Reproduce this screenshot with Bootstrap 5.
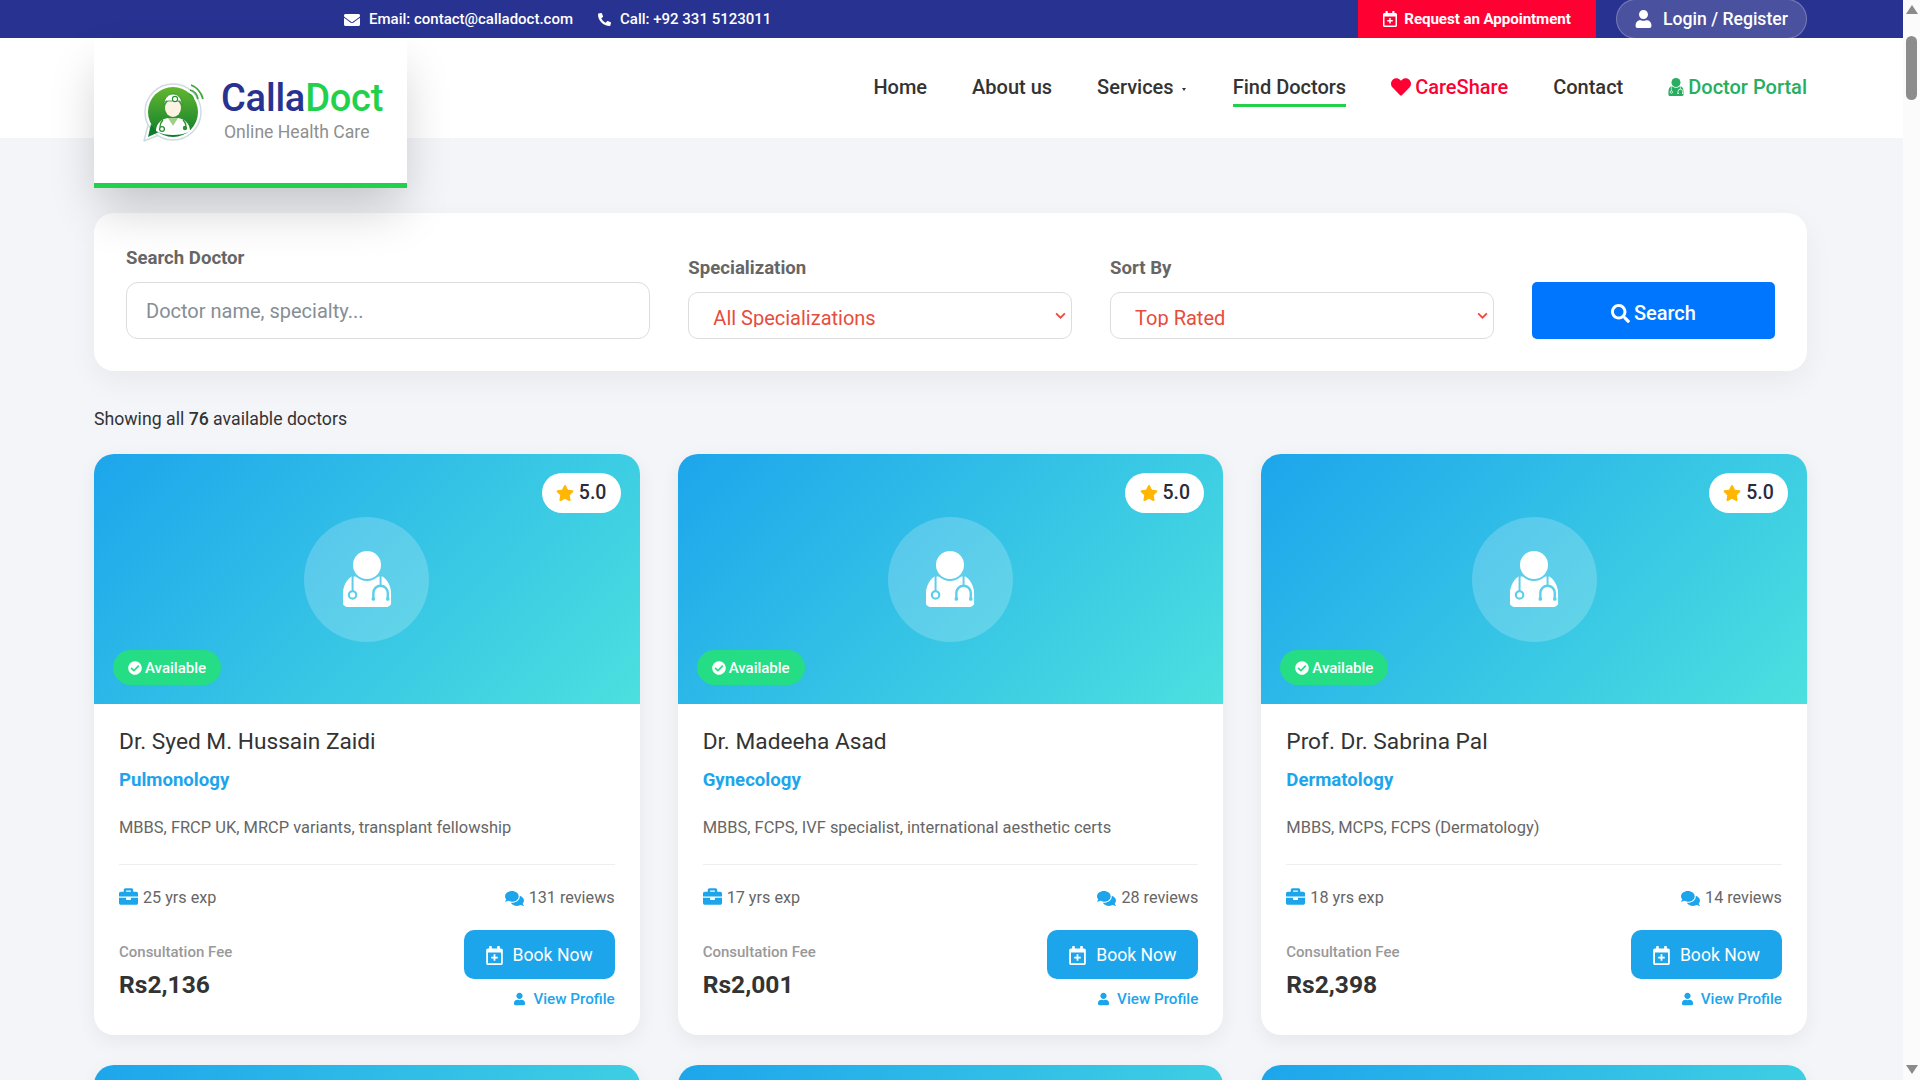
<!DOCTYPE html>
<html lang="en">
<head>
  <meta charset="utf-8">
  <title>Find Doctors - CallaDoct</title>
  <link href="https://cdn.jsdelivr.net/npm/bootstrap@5.3.0/dist/css/bootstrap.min.css" rel="stylesheet">
  <style>
    html, body { height: 100%; overflow: hidden; }
    body { font-family: Roboto, "Liberation Sans", sans-serif; background: #f3f5f9; color: #333; }
    .ico { fill: currentColor; flex: none; display: inline-block; }
    .sym-sheet { position: absolute; width: 0; height: 0; }

    .page-shell { height: 100vh; }
    .page-main { height: 100vh; overflow: hidden; min-width: 0; }
    .wrap-x { padding-left: 94px; padding-right: 96px; }

    /* fake browser scrollbar */
    .fake-scroll { width: 17px; height: 100vh; background: #fbfbfb; }
    .fake-arrow-up { width: 0; height: 0; border-left: 6px solid transparent; border-right: 6px solid transparent; border-bottom: 9px solid #8a8a8a; margin-top: 5px; }
    .fake-arrow-down { width: 0; height: 0; border-left: 6px solid transparent; border-right: 6px solid transparent; border-top: 9px solid #8a8a8a; margin-bottom: 6px; }
    .fake-thumb { width: 11px; height: 64px; margin-top: 22px; background: #8c8c8c; border-radius: 6px; }

    .top-strip { height: 38px; background: #283290; color: #fff; overflow: hidden; }
    .top-contact { padding-left: 250px; padding-top: 1px; font-size: 15px; font-weight: 500; gap: 25px; }
    .top-contact span { display: flex; align-items: center; gap: 9px; }
    .top-appoint { height: 38px; width: 238px; background: #ff0033; color: #fff; font-size: 15.2px; font-weight: 700; letter-spacing: -.1px; text-decoration: none; gap: 7px; }
    .top-login { height: 40px; width: 191px; margin-left: 20px; background: #4a519e; border: 1px solid rgba(255,255,255,.25); border-radius: 40px; color: #fff; font-size: 17.6px; font-weight: 500; text-decoration: none; gap: 11px; }

    .head-bar { height: 100px; background: #fff; }
    .logo-box { width: 313px; height: 150px; margin-bottom: -50px; background: #fff; border-bottom: 5px solid #22d14b; box-shadow: 0 25px 50px -5px rgba(0,0,0,.2); position: relative; z-index: 5; padding: 38px 0 0 47px; }
    .logo-mark { margin: 7px 14px 0 0; flex: none; }
    .logo-name { font-size: 38px; font-weight: 500; line-height: 44px; letter-spacing: -.2px; color: #283290; }
    .logo-name b { font-weight: 500; color: #22d14b; }
    .logo-sub { font-size: 17.6px; line-height: 22px; color: #8f8f8f; margin-left: 3px; margin-top: 1px; }

    .main-menu { gap: 45px; }
    .main-menu a { font-size: 20px; font-weight: 500; color: #333; text-decoration: none; display: flex; align-items: center; line-height: 28px; padding: 3px 0; border-bottom: 3px solid transparent; }
    .main-menu a.is-active { border-bottom-color: #22d14b; }
    .main-menu a.is-red { color: #ff0033; }
    .main-menu a.is-green { color: #27ae60; }
    .menu-caret { width: 0; height: 0; border-left: 2.5px solid transparent; border-right: 2.5px solid transparent; border-top: 3px solid #333; margin: 5px 2px 0 8px; }

    .search-panel { margin-top: 75px; background: #fff; border-radius: 20px; padding: 32px; box-shadow: 0 10px 30px rgba(0,0,0,.05); }
    .search-row { --bs-gutter-x: 38px; --bs-gutter-y: 0; }
    .search-label { font-size: 18.6px; font-weight: 700; color: #666; margin-bottom: 12px; padding-top: 1px; line-height: 24px; display: block; }
    .search-input { height: 57px; border-radius: 12px; border: 1px solid #ddd; padding: 0 19px; font-size: 20px; color: #333; }
    .search-input::placeholder { color: #868e96; }
    .search-select { height: 47px; border-radius: 10px; border: 1px solid #ddd; padding: 13px 24px 11px 24px; font-size: 20px; line-height: 24px; color: #e74c3c;
      background-image: url("data:image/svg+xml,%3csvg xmlns='http://www.w3.org/2000/svg' viewBox='0 0 12 8'%3e%3cpath fill='none' stroke='%23e74c3c' stroke-width='2' d='M1 1.500l5 5 5-5'/%3e%3c/svg%3e"); background-position: right 5px center; background-size: 11px 7px; }
    .search-btn { height: 57px; width: 100%; padding-top: 11px; background: #0076ff; color: #fff; border: 0; border-radius: 5px; font-size: 20px; font-weight: 500; }

    .result-note { font-size: 17.7px; line-height: 24px; margin: 36px 0 23px; color: #333; }
    .result-note strong { font-weight: 500; }

    .doc-row { --bs-gutter-x: 38px; --bs-gutter-y: 30px; }
    .doc-card { background: #fff; border-radius: 20px; overflow: hidden; box-shadow: 0 6px 20px rgba(0,0,0,.06); height: 581px; }
    .doc-head { height: 250px; background: linear-gradient(135deg, #1da5ec, #4ce0df); position: relative; }
    .doc-avatar { width: 125px; height: 125px; border-radius: 50%; background: rgba(255,255,255,.2); color: #fff; }
    .doc-rate { position: absolute; top: 19px; right: 19px; width: 79px; height: 40px; background: #fff; border-radius: 20px; font-size: 19.5px; font-weight: 500; color: #2b2b3a; gap: 5px; }
    .doc-avail { position: absolute; left: 19px; bottom: 19px; height: 35px; width: 108px; padding-top: 1px; background: #25dd84; color: #fff; border-radius: 18px; font-size: 15px; font-weight: 500; gap: 3px; }
    .doc-body { padding: 21px 25px 0; }
    .doc-name { font-size: 22.7px; font-weight: 450; line-height: 34px; margin: 0; color: #333; }
    .doc-spec { font-size: 18.6px; font-weight: 700; color: #1da5ec; line-height: 24px; margin-top: 9px; }
    .doc-qual { font-size: 16.45px; font-weight: 400; color: #666; line-height: 22px; margin-top: 25px; padding-bottom: 25px; border-bottom: 1px solid #eee; }
    .doc-meta { font-size: 16.2px; color: #666; margin-top: 21px; line-height: 24px; }
    .doc-meta span { display: flex; align-items: center; gap: 5px; }
    .doc-meta .ico { color: #1da5ec; }
    .doc-meta .ico-case { margin-top: -4px; }
    .fee-label { font-size: 15px; font-weight: 500; color: #999; line-height: 20px; margin-top: 32px; }
    .fee-value { font-size: 24.6px; font-weight: 700; color: #333; line-height: 34px; margin-top: 6px; }
    .book-btn { width: 151px; height: 49px; padding-top: 8px; background: #1da5ec; color: #fff; border: 0; border-radius: 10px; font-size: 17.6px; font-weight: 400; gap: 10px; }
    .profile-link { font-size: 15.2px; font-weight: 500; color: #1da5ec; text-decoration: none; gap: 8px; line-height: 20px; margin-top: 10px; }
    .book-col { padding-top: 20px; }
  </style>
</head>
<body>
  <svg width="0" height="0" class="sym-sheet">
    <defs>
      <symbol id="i-mail" viewBox="0 0 512 512"><path d="M502.3 190.8c3.9-3.1 9.7-.2 9.7 4.7V400c0 26.5-21.5 48-48 48H48c-26.5 0-48-21.5-48-48V195.6c0-5 5.7-7.8 9.7-4.7 22.4 17.4 52.1 39.5 154.1 113.6 21.1 15.4 56.7 47.8 92.2 47.6 35.7.3 72-32.8 92.3-47.6 102-74.1 131.6-96.3 154-113.7zM256 320c23.2.4 56.6-29.2 73.4-41.4 132.7-96.3 142.8-104.7 173.4-128.7 5.8-4.5 9.2-11.5 9.2-18.9v-19c0-26.5-21.5-48-48-48H48C21.5 64 0 85.5 0 112v19c0 7.4 3.4 14.3 9.2 18.9 30.6 23.9 40.7 32.4 173.4 128.7 16.8 12.2 50.2 41.8 73.4 41.4z"/></symbol>
      <symbol id="i-phone" viewBox="0 0 512 512"><path transform="matrix(-1 0 0 1 512 0)" d="M493.4 24.6l-104-24c-11.3-2.6-22.9 3.3-27.5 13.9l-48 112c-4.2 9.8-1.4 21.3 6.9 28l60.6 49.6c-36 76.7-98.9 140.5-177.2 177.2l-49.6-60.6c-6.8-8.3-18.2-11.1-28-6.9l-112 48C3.9 366.5-2 378.1.6 389.4l24 104C27.1 504.2 36.7 512 48 512c256.1 0 464-207.5 464-464 0-11.2-7.7-20.9-18.6-23.4z"/></symbol>
      <symbol id="i-cal" viewBox="0 0 448 512"><path fill-rule="evenodd" d="M96 0h40c9 0 16 7 16 16v48h144V16c0-9 7-16 16-16h40c9 0 16 7 16 16v48h32c26.500 0 48 21.500 48 48v352c0 26.500-21.500 48-48 48H48c-26.500 0-48-21.500-48-48V112c0-26.500 21.500-48 48-48h32V16c0-9 7-16 16-16zM48 176v282c0 3 3 6 6 6h340c3 0 6-3 6-6V176H48zM200 224h48v64h64v48h-64v64h-48v-64h-64v-48h64z"/></symbol>
      <symbol id="i-user" viewBox="0 0 448 512"><path d="M224 256c70.700 0 128-57.300 128-128S294.700 0 224 0 96 57.300 96 128s57.300 128 128 128zm89.600 32h-16.700c-22.200 10.200-46.900 16-72.900 16s-50.600-5.800-72.900-16h-16.700C60.200 288 0 348.200 0 422.400V464c0 26.500 21.500 48 48 48h352c26.500 0 48-21.500 48-48v-41.600c0-74.200-60.200-134.400-134.400-134.400z"/></symbol>
      <symbol id="i-heart" viewBox="0 0 512 512"><path d="M462.300 62.600C407.500 15.900 326 24.300 275.700 76.200L256 96.500l-19.700-20.300C186.100 24.300 104.500 15.900 49.700 62.600c-62.800 53.600-66.100 149.800-9.900 207.900l193.500 199.800c12.500 12.900 32.800 12.900 45.300 0l193.500-199.800c56.300-58.100 53-154.300-9.800-207.900z"/></symbol>
      <symbol id="i-star" viewBox="0 0 576 512"><path d="M259.300 17.800L194 150.200 47.900 171.500c-26.200 3.800-36.700 36.100-17.700 54.600l105.700 103-25 145.500c-4.500 26.300 23.200 46 46.400 33.700L288 439.600l130.700 68.700c23.200 12.200 50.900-7.400 46.400-33.700l-25-145.500 105.700-103c19-18.500 8.500-50.800-17.700-54.600L382 150.200 316.700 17.800c-11.700-23.600-45.600-24.100-57.400 0z"/></symbol>
      <symbol id="i-check" viewBox="0 0 512 512"><path d="M504 256c0 136.967-111.033 248-248 248S8 392.967 8 256 119.033 8 256 8s248 111.033 248 248zM227.314 387.314l184-184c6.248-6.248 6.248-16.379 0-22.627l-22.627-22.627c-6.248-6.249-16.379-6.249-22.628 0L216 308.118l-70.059-70.059c-6.248-6.248-16.379-6.248-22.628 0l-22.627 22.627c-6.248 6.248-6.248 16.379 0 22.627l104 104c6.249 6.249 16.379 6.249 22.628.001z"/></symbol>
      <symbol id="i-case" viewBox="0 0 512 512"><path d="M320 336c0 8.840-7.160 16-16 16h-96c-8.840 0-16-7.160-16-16v-48H0v144c0 25.600 22.400 48 48 48h416c25.600 0 48-22.400 48-48V288H320v48zm144-208h-80V80c0-25.600-22.400-48-48-48H176c-25.600 0-48 22.400-48 48v48H48c-25.600 0-48 22.400-48 48v80h512v-80c0-25.600-22.400-48-48-48zm-144 0H192V96h128v32z"/></symbol>
      <symbol id="i-chat" viewBox="0 0 576 512"><path d="M416 192c0-88.400-93.100-160-208-160S0 103.600 0 192c0 34.300 14.100 65.900 38 92-13.400 30.200-35.500 54.200-35.800 54.500-2.200 2.300-2.800 5.700-1.500 8.700S4.800 352 8 352c36.600 0 66.900-12.300 88.700-25 32.200 15.700 70.300 25 111.300 25 114.900 0 208-71.600 208-160zm122 220c23.900-26 38-57.700 38-92 0-66.900-53.500-124.200-129.300-148.100.9 6.600 1.300 13.300 1.300 20.100 0 105.900-107.700 192-240 192-10.800 0-21.300-.8-31.700-1.900C207.800 439.600 281.800 480 368 480c41 0 79.100-9.200 111.300-25 21.800 12.700 52.100 25 88.700 25 3.200 0 6.100-1.900 7.300-4.800 1.300-2.900.7-6.300-1.500-8.700-.3-.3-22.400-24.200-35.800-54.500z"/></symbol>
      <symbol id="i-search" viewBox="0 0 512 512"><path d="M505 442.700L405.300 343c-4.500-4.500-10.600-7-17-7H372c27.600-35.300 44-79.700 44-128C416 93.100 322.900 0 208 0S0 93.100 0 208s93.100 208 208 208c48.300 0 92.700-16.400 128-44v16.300c0 6.400 2.500 12.500 7 17l99.700 99.700c9.400 9.400 24.600 9.400 33.900 0l28.300-28.300c9.400-9.400 9.400-24.600.1-34zM208 336c-70.700 0-128-57.200-128-128 0-70.700 57.200-128 128-128 70.700 0 128 57.200 128 128 0 70.700-57.200 128-128 128z"/></symbol>
      <mask id="m-doc" maskUnits="userSpaceOnUse" x="0" y="0" width="448" height="512">
        <rect width="448" height="512" fill="#fff"/>
        <circle cx="224" cy="128" r="146" fill="#000"/>
        <path d="M92 220V368M348 220V320" stroke="#000" stroke-width="18" fill="none"/>
        <circle cx="92" cy="402" r="34" fill="none" stroke="#000" stroke-width="20"/>
        <path d="M282 436V384a66 66 0 0 1 132 0V436" stroke="#000" stroke-width="22" fill="none" stroke-linecap="round"/>
        <circle cx="282" cy="438" r="17" fill="#000"/>
        <circle cx="414" cy="438" r="17" fill="#000"/>
      </mask>
      <symbol id="i-doc" viewBox="0 0 448 512">
        <circle cx="224" cy="128" r="128"/>
        <path mask="url(#m-doc)" d="M0 422c0-84 26-150 82-190H366c56 40 82 106 82 190v42c0 26-21 48-48 48H48c-27 0-48-22-48-48z"/>
      </symbol>
    </defs>
  </svg>

  <div class="page-shell d-flex">
    <div class="page-main flex-grow-1">

      <div class="top-strip wrap-x d-flex align-items-center justify-content-between">
        <div class="top-contact d-flex">
          <span><svg class="ico" width="16" height="16"><use href="#i-mail"/></svg>Email: contact@calladoct.com</span>
          <span><svg class="ico" width="13" height="13"><use href="#i-phone"/></svg>Call: +92 331 5123011</span>
        </div>
        <div class="d-flex align-items-center">
          <a href="#" class="top-appoint d-flex align-items-center justify-content-center"><svg class="ico" width="14" height="16"><use href="#i-cal"/></svg>Request an Appointment</a>
          <a href="#" class="top-login d-flex align-items-center justify-content-center"><svg class="ico" width="17" height="18"><use href="#i-user"/></svg>Login / Register</a>
        </div>
      </div>

      <header class="head-bar wrap-x d-flex align-items-start justify-content-between">
        <div class="logo-box d-flex">
          <svg class="logo-mark" width="66" height="62" viewBox="0 0 66 62">
            <defs><linearGradient id="lg" x1="0" y1="0" x2="0" y2="1"><stop offset="0" stop-color="#63b72f"/><stop offset="1" stop-color="#0e7c2d"/></linearGradient></defs>
            <path d="M3 58 L7 42 L18 52 Z" fill="#fff" stroke="#cfdbe2" stroke-width="1.500" stroke-linejoin="round"/>
            <circle cx="32" cy="29" r="28" fill="#fff" stroke="#cfdbe2" stroke-width="1.500"/>
            <path d="M7 54 L10 41 L18 49 Z" fill="#0e7c2d"/>
            <circle cx="32" cy="29" r="25" fill="url(#lg)"/>
            <path d="M15 48c0-8 6-12 12-13h10c6 1 12 5 12 13-5 3-11 4-17 4s-12-1-17-4z" fill="#fff"/>
            <path d="M27 35l5 8 5-8" fill="#9fd08a"/>
            <path d="M22 37c-2 2-3 4-3 7M42 37c2 2 3 4 3 6" stroke="#2b8f2e" stroke-width="1.300" fill="none"/>
            <circle cx="21" cy="46" r="2.400" fill="none" stroke="#2b8f2e" stroke-width="1.300"/>
            <circle cx="44" cy="45" r="2.200" fill="#2b8f2e"/>
            <ellipse cx="32" cy="25" rx="8" ry="9" fill="#fdf3e4"/>
            <path d="M23 22c0-8 5-11 9-11s9 3 9 11l-2-4H25z" fill="#fff" stroke="#2b8f2e" stroke-width=".8"/>
            <circle cx="34" cy="16" r="2.600" fill="#fff" stroke="#2b8f2e" stroke-width="1.100"/>
            <path d="M50 2c6 2 10 7 12 14M49 7c4 1 7 4 8 9M48 11c2 1 4 3 4 5" stroke="#3fa63a" stroke-width="1.800" fill="none"/>
          </svg>
          <div>
            <div class="logo-name">Calla<b>Doct</b></div>
            <div class="logo-sub">Online Health Care</div>
          </div>
        </div>
        <nav class="main-menu d-flex align-self-center">
          <a href="#">Home</a>
          <a href="#">About us</a>
          <a href="#">Services<i class="menu-caret"></i></a>
          <a href="#" class="is-active">Find Doctors</a>
          <a href="#" class="is-red"><svg class="ico me-1" width="20" height="20"><use href="#i-heart"/></svg>CareShare</a>
          <a href="#">Contact</a>
          <a href="#" class="is-green"><svg class="ico me-1" width="16" height="18"><use href="#i-doc"/></svg>Doctor Portal</a>
        </nav>
      </header>

      <div class="wrap-x">
        <form class="search-panel">
          <div class="row search-row align-items-end">
            <div class="col-4">
              <label class="search-label" for="q">Search Doctor</label>
              <input id="q" type="text" class="form-control search-input" placeholder="Doctor name, specialty...">
            </div>
            <div class="col-3">
              <label class="search-label" for="spec">Specialization</label>
              <select id="spec" class="form-select search-select"><option>All Specializations</option></select>
            </div>
            <div class="col-3">
              <label class="search-label" for="sort">Sort By</label>
              <select id="sort" class="form-select search-select"><option>Top Rated</option></select>
            </div>
            <div class="col-2">
              <button type="button" class="btn search-btn d-flex align-items-center justify-content-center gap-1"><svg class="ico" width="19" height="19"><use href="#i-search"/></svg>Search</button>
            </div>
          </div>
        </form>

        <p class="result-note">Showing all <strong>76</strong> available doctors</p>

        <div class="row doc-row">

          <div class="col-4">
            <div class="doc-card">
              <div class="doc-head d-flex align-items-center justify-content-center">
                <div class="doc-rate d-flex align-items-center justify-content-center"><svg class="ico" width="18" height="16" style="color:#ffb703"><use href="#i-star"/></svg>5.0</div>
                <div class="doc-avatar d-flex align-items-center justify-content-center"><svg class="ico" width="50" height="56"><use href="#i-doc"/></svg></div>
                <div class="doc-avail d-flex align-items-center justify-content-center"><svg class="ico" width="14" height="14"><use href="#i-check"/></svg>Available</div>
              </div>
              <div class="doc-body">
                <h5 class="doc-name">Dr. Syed M. Hussain Zaidi</h5>
                <div class="doc-spec">Pulmonology</div>
                <div class="doc-qual">MBBS, FRCP UK, MRCP variants, transplant fellowship</div>
                <div class="doc-meta d-flex justify-content-between">
                  <span><svg class="ico ico-case" width="19" height="19"><use href="#i-case"/></svg>25 yrs exp</span>
                  <span><svg class="ico" width="19" height="17"><use href="#i-chat"/></svg>131 reviews</span>
                </div>
                <div class="d-flex justify-content-between">
                  <div>
                    <div class="fee-label">Consultation Fee</div>
                    <div class="fee-value">Rs2,136</div>
                  </div>
                  <div class="book-col d-flex flex-column align-items-end">
                    <button type="button" class="btn book-btn d-flex align-items-center justify-content-center"><svg class="ico" width="17" height="19"><use href="#i-cal"/></svg>Book Now</button>
                    <a href="#" class="profile-link d-flex align-items-center"><svg class="ico" width="11" height="14"><use href="#i-user"/></svg>View Profile</a>
                  </div>
                </div>
              </div>
            </div>
          </div>

          <div class="col-4">
            <div class="doc-card">
              <div class="doc-head d-flex align-items-center justify-content-center">
                <div class="doc-rate d-flex align-items-center justify-content-center"><svg class="ico" width="18" height="16" style="color:#ffb703"><use href="#i-star"/></svg>5.0</div>
                <div class="doc-avatar d-flex align-items-center justify-content-center"><svg class="ico" width="50" height="56"><use href="#i-doc"/></svg></div>
                <div class="doc-avail d-flex align-items-center justify-content-center"><svg class="ico" width="14" height="14"><use href="#i-check"/></svg>Available</div>
              </div>
              <div class="doc-body">
                <h5 class="doc-name">Dr. Madeeha Asad</h5>
                <div class="doc-spec">Gynecology</div>
                <div class="doc-qual">MBBS, FCPS, IVF specialist, international aesthetic certs</div>
                <div class="doc-meta d-flex justify-content-between">
                  <span><svg class="ico ico-case" width="19" height="19"><use href="#i-case"/></svg>17 yrs exp</span>
                  <span><svg class="ico" width="19" height="17"><use href="#i-chat"/></svg>28 reviews</span>
                </div>
                <div class="d-flex justify-content-between">
                  <div>
                    <div class="fee-label">Consultation Fee</div>
                    <div class="fee-value">Rs2,001</div>
                  </div>
                  <div class="book-col d-flex flex-column align-items-end">
                    <button type="button" class="btn book-btn d-flex align-items-center justify-content-center"><svg class="ico" width="17" height="19"><use href="#i-cal"/></svg>Book Now</button>
                    <a href="#" class="profile-link d-flex align-items-center"><svg class="ico" width="11" height="14"><use href="#i-user"/></svg>View Profile</a>
                  </div>
                </div>
              </div>
            </div>
          </div>

          <div class="col-4">
            <div class="doc-card">
              <div class="doc-head d-flex align-items-center justify-content-center">
                <div class="doc-rate d-flex align-items-center justify-content-center"><svg class="ico" width="18" height="16" style="color:#ffb703"><use href="#i-star"/></svg>5.0</div>
                <div class="doc-avatar d-flex align-items-center justify-content-center"><svg class="ico" width="50" height="56"><use href="#i-doc"/></svg></div>
                <div class="doc-avail d-flex align-items-center justify-content-center"><svg class="ico" width="14" height="14"><use href="#i-check"/></svg>Available</div>
              </div>
              <div class="doc-body">
                <h5 class="doc-name">Prof. Dr. Sabrina Pal</h5>
                <div class="doc-spec">Dermatology</div>
                <div class="doc-qual">MBBS, MCPS, FCPS (Dermatology)</div>
                <div class="doc-meta d-flex justify-content-between">
                  <span><svg class="ico ico-case" width="19" height="19"><use href="#i-case"/></svg>18 yrs exp</span>
                  <span><svg class="ico" width="19" height="17"><use href="#i-chat"/></svg>14 reviews</span>
                </div>
                <div class="d-flex justify-content-between">
                  <div>
                    <div class="fee-label">Consultation Fee</div>
                    <div class="fee-value">Rs2,398</div>
                  </div>
                  <div class="book-col d-flex flex-column align-items-end">
                    <button type="button" class="btn book-btn d-flex align-items-center justify-content-center"><svg class="ico" width="17" height="19"><use href="#i-cal"/></svg>Book Now</button>
                    <a href="#" class="profile-link d-flex align-items-center"><svg class="ico" width="11" height="14"><use href="#i-user"/></svg>View Profile</a>
                  </div>
                </div>
              </div>
            </div>
          </div>

          <div class="col-4"><div class="doc-card"><div class="doc-head"></div></div></div>
          <div class="col-4"><div class="doc-card"><div class="doc-head"></div></div></div>
          <div class="col-4"><div class="doc-card"><div class="doc-head"></div></div></div>
        </div>
      </div>
    </div>

    <div class="fake-scroll flex-none d-flex flex-column align-items-center">
      <div class="fake-arrow-up"></div>
      <div class="fake-thumb"></div>
      <div class="fake-arrow-down mt-auto"></div>
    </div>
  </div>

  <script src="https://cdn.jsdelivr.net/npm/bootstrap@5.3.0/dist/js/bootstrap.bundle.min.js"></script>
</body>
</html>
